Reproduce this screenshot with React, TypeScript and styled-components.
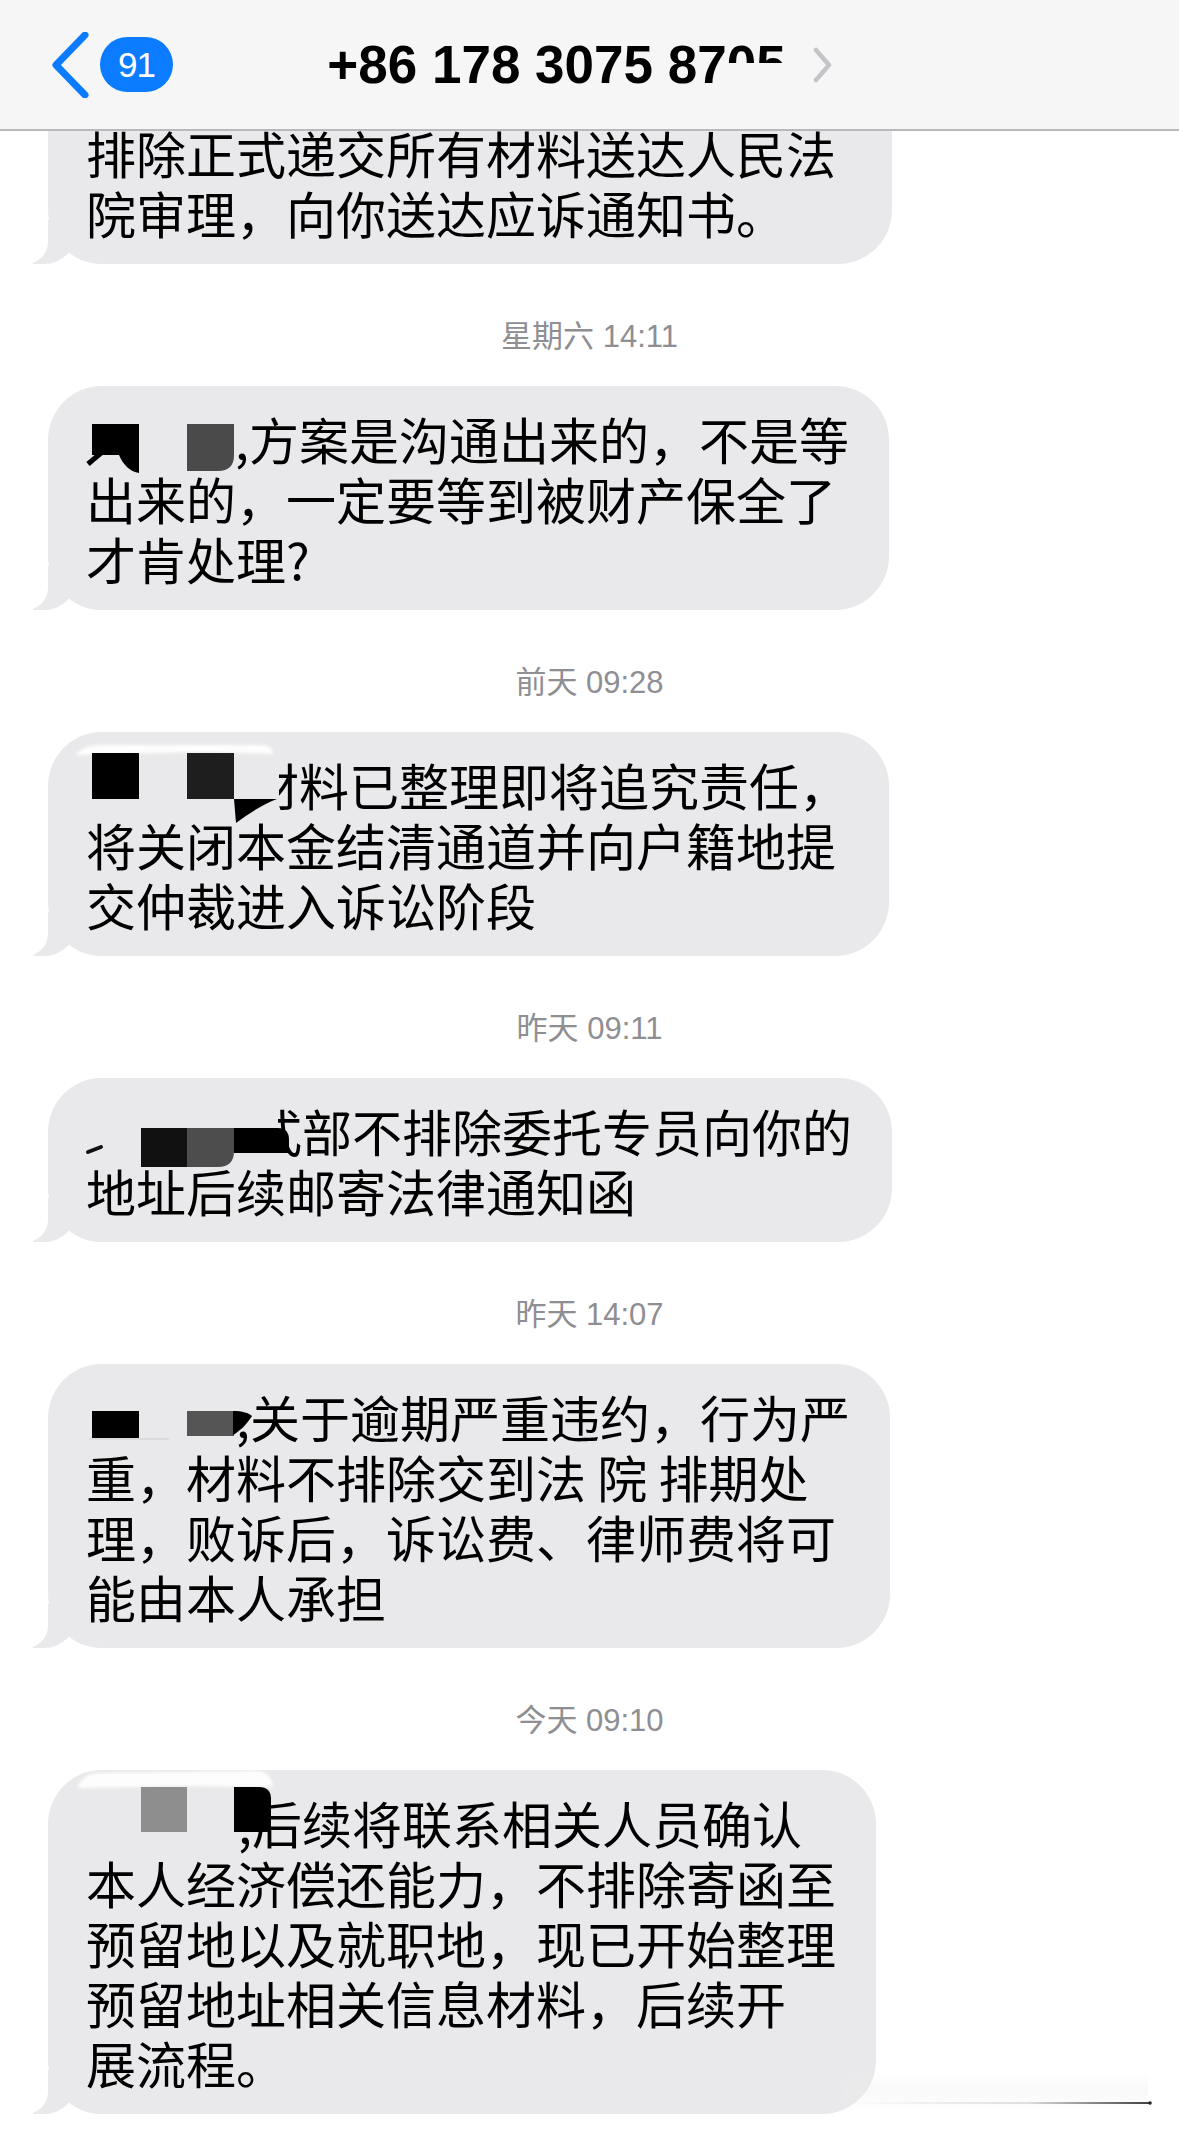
import React from "react";
import styled, { createGlobalStyle } from "styled-components";

const GlobalStyle = createGlobalStyle`
  html, body {
    margin: 0;
    padding: 0;
    background: #ffffff;
  }
  body {
    font-family: "Noto Sans CJK SC", "Noto Sans", sans-serif;
  }
`;

const Screen = styled.div`
  position: relative;
  width: 1179px;
  min-height: 2134px;
  overflow: hidden;
  background: #ffffff;
`;

/* ---------- navigation bar ---------- */

const NavBar = styled.header`
  position: absolute;
  top: 0;
  left: 0;
  right: 0;
  height: 129px;
  z-index: 5;
  display: grid;
  grid-template-columns: 1fr auto 1fr;
  align-items: center;
  background: #f6f6f6;
  border-bottom: 2px solid #b9b9bb;
`;

const BackButton = styled.div`
  display: flex;
  align-items: center;
  gap: 10px;
  padding-left: 50px;
`;

const UnreadBadge = styled.span`
  display: inline-flex;
  align-items: center;
  justify-content: center;
  min-width: 73px;
  height: 55px;
  border-radius: 28px;
  background: #0b7cff;
  color: #ffffff;
  font-family: "Liberation Sans", Arial, sans-serif;
  font-size: 35px;
  letter-spacing: -1px;
`;

const TitleGroup = styled.div`
  display: flex;
  align-items: center;
  gap: 26px;
  margin-left: -18px;
`;

const Title = styled.h1`
  margin: 0;
  font-family: "Liberation Sans", Arial, sans-serif;
  font-weight: 700;
  font-size: 53px;
  line-height: 53px;
  color: #000000;
  white-space: nowrap;
`;

const CutDigits = styled.span`
  display: inline-block;
  height: 25px;
  overflow: hidden;
  vertical-align: top;
  line-height: 53px;
`;

/* ---------- conversation ---------- */

const Thread = styled.main`
  display: flex;
  flex-direction: column;
  align-items: flex-start;
  padding: 42px 0 0 48px;
`;

const Stamp = styled.div`
  align-self: stretch;
  margin: 53px 48px 29px 0;
  text-align: center;
  font-family: "Liberation Sans", "Noto Sans CJK SC", sans-serif;
  font-size: 31px;
  line-height: 40px;
  color: #8e8e93;
`;

const Bubble = styled.div<{ $continued?: boolean }>`
  position: relative;
  box-sizing: border-box;
  width: ${(p) => (p.$continued ? "844px" : "auto")};
  padding: ${(p) => (p.$continued ? "80px" : "22px")} 40px 22px 38px;
  border-radius: 54px;
  background: #e9e9eb;
  color: #000000;
  font-size: 50px;
  line-height: 60px;

  &::before {
    content: "";
    position: absolute;
    z-index: 0;
    bottom: 0;
    left: -15px;
    width: 44px;
    height: 44px;
    background: #e9e9eb;
    border-bottom-right-radius: 33px;
  }

  &::after {
    content: "";
    position: absolute;
    z-index: 1;
    bottom: 0;
    left: -22px;
    width: 22px;
    height: 44px;
    background: #ffffff;
    border-bottom-right-radius: 22px;
  }
`;

const Line = styled.span`
  display: block;
  white-space: nowrap;
`;

const Mask = styled.svg`
  display: inline-block;
  vertical-align: top;
  height: 60px;
  overflow: visible;
`;

const Clip = styled.span<{ $w: number }>`
  display: inline-block;
  vertical-align: top;
  width: ${(p) => p.$w}px;
  height: 60px;
  overflow: hidden;
`;

const ClipInner = styled.span<{ $shift: number }>`
  display: inline-block;
  margin-left: ${(p) => p.$shift}px;
`;

const Smear = styled.svg`
  position: absolute;
  left: 838px;
  top: 2068px;
  width: 320px;
  height: 48px;
  pointer-events: none;
`;

/* ---------- small drawings ---------- */

const BackChevron = () => (
  <svg width="40" height="66" viewBox="0 0 40 66" aria-hidden>
    <path
      d="M35 3 L6 33 L35 63"
      fill="none"
      stroke="#0b7cff"
      strokeWidth="7"
      strokeLinecap="round"
      strokeLinejoin="round"
    />
  </svg>
);

const InfoChevron = () => (
  <svg width="22" height="36" viewBox="0 0 22 36" aria-hidden>
    <path
      d="M4 3 L17 18 L4 33"
      fill="none"
      stroke="#c4c4c8"
      strokeWidth="4.5"
      strokeLinecap="round"
      strokeLinejoin="round"
    />
  </svg>
);

const Wisp = ({ d, id }: { d: string; id: string }) => (
  <>
    <defs>
      <filter id={id} x="-10%" y="-100%" width="120%" height="300%">
        <feGaussianBlur stdDeviation="1.6" />
      </filter>
    </defs>
    <path d={d} fill="#ffffff" opacity="0.92" filter={`url(#${id})`} />
  </>
);

const MaskA = () => (
  <Mask width={149} viewBox="0 0 149 60" aria-hidden>
    <path d="M6 16 H53 V65 C45 64 37 57 33 47 H6 Z" fill="#000" />
    <path d="M2 56 L15 45" stroke="#000" strokeWidth="5" />
    <path d="M101 16 H148 V47 Q148 63 132 63 H101 Z" fill="#4a4a4a" />
  </Mask>
);

const MaskB = () => (
  <Mask width={193} viewBox="0 0 193 60" aria-hidden>
    <Wisp id="wispB" d="M-10 1 C-6 -5 2 -9 18 -9 L176 -9 C183 -9 187 -5 187 0 L120 -2 L-10 1 Z" />
    <rect x="6" y="-1" width="47" height="46" fill="#000" />
    <rect x="101" y="-1" width="47" height="46" fill="#1e1e1e" />
    <path d="M148 45 L191 45 C178 50 163 59 150 69 Z" fill="#000" />
  </Mask>
);

const MaskC = () => (
  <Mask width={192} viewBox="0 0 192 60" aria-hidden>
    <path d="M2 52 L15 47" stroke="#111" strokeWidth="4" strokeLinecap="round" />
    <rect x="55" y="28" width="46" height="39" fill="#111" />
    <path d="M101 28 H148 V51 Q148 67 132 67 H101 Z" fill="#4d4d4d" />
    <path d="M148 28 H192 Q203 28 203 40 V53 H148 Z" fill="#000" />
  </Mask>
);

const MaskD = () => (
  <Mask width={150} viewBox="0 0 150 60" aria-hidden>
    <rect x="6" y="25" width="47" height="27" fill="#000" />
    <line x1="3" y1="53" x2="83" y2="53" stroke="#cfcfd2" strokeWidth="1" />
    <rect x="101" y="25" width="47" height="25" fill="#555" />
    <path d="M147 25 C156 25 163 27 166 30 C160 39 154 45 147 49 Z" fill="#000" />
  </Mask>
);

const MaskE = () => (
  <Mask width={152} viewBox="0 0 152 60" aria-hidden>
    <Wisp id="wispE" d="M-8 -4 C-6 -12 0 -18 12 -19 L170 -21 C180 -21 186 -14 187 -5 L100 -6 L-8 -4 Z" />
    <rect x="55" y="-5" width="46" height="45" fill="#8e8e8e" />
    <path d="M148 -5 H173 Q185 -5 185 7 V40 H148 Z" fill="#000" />
  </Mask>
);

/* ---------- content ---------- */

type Message = {
  stamp?: string;
  continued?: boolean;
  lines: React.ReactNode[];
};

const messages: Message[] = [
  {
    continued: true,
    lines: ["排除正式递交所有材料送达人民法", "院审理，向你送达应诉通知书。"],
  },
  {
    stamp: "星期六 14:11",
    lines: [
      <>
        <MaskA />
        ,方案是沟通出来的，不是等
      </>,
      "出来的，一定要等到被财产保全了",
      "才肯处理?",
    ],
  },
  {
    stamp: "前天 09:28",
    lines: [
      <>
        <MaskB />
        <Clip $w={20}>
          <ClipInner $shift={-30}>材</ClipInner>
        </Clip>
        料已整理即将追究责任，
      </>,
      "将关闭本金结清通道并向户籍地提",
      "交仲裁进入诉讼阶段",
    ],
  },
  {
    stamp: "昨天 09:11",
    lines: [
      <>
        <MaskC />
        <Clip $w={24}>
          <ClipInner $shift={-26}>式</ClipInner>
        </Clip>
        部不排除委托专员向你的
      </>,
      "地址后续邮寄法律通知函",
    ],
  },
  {
    stamp: "昨天 14:07",
    lines: [
      <>
        <MaskD />
        ,关于逾期严重违约，行为严
      </>,
      "重，材料不排除交到法 院 排期处",
      "理，败诉后，诉讼费、律师费将可",
      "能由本人承担",
    ],
  },
  {
    stamp: "今天 09:10",
    lines: [
      <>
        <MaskE />
        ,后续将联系相关人员确认
      </>,
      "本人经济偿还能力，不排除寄函至",
      "预留地以及就职地，现已开始整理",
      "预留地址相关信息材料，后续开",
      "展流程。",
    ],
  },
];

export default function App() {
  return (
    <Screen>
      <GlobalStyle />
      <NavBar>
        <BackButton>
          <BackChevron />
          <UnreadBadge>91</UnreadBadge>
        </BackButton>
        <TitleGroup>
          <Title>
            +86 178 3075 87<CutDigits>05</CutDigits>
          </Title>
          <InfoChevron />
        </TitleGroup>
        <div />
      </NavBar>

      <Thread>
        {messages.map((m, i) => (
          <React.Fragment key={i}>
            {m.stamp && <Stamp>{m.stamp}</Stamp>}
            <Bubble $continued={m.continued}>
              {m.lines.map((l, j) => (
                <Line key={j}>{l}</Line>
              ))}
            </Bubble>
          </React.Fragment>
        ))}
      </Thread>

      {/* faint trail left along the lower right edge */}
      <Smear viewBox="0 0 320 48" aria-hidden>
        <defs>
          <linearGradient id="trail" x1="0" x2="1" y1="0" y2="0">
            <stop offset="0" stopColor="#000" stopOpacity="0" />
            <stop offset="0.6" stopColor="#000" stopOpacity="0.12" />
            <stop offset="1" stopColor="#000" stopOpacity="0.75" />
          </linearGradient>
          <linearGradient id="haze" x1="0" x2="0" y1="0" y2="1">
            <stop offset="0" stopColor="#ececec" stopOpacity="0" />
            <stop offset="0.5" stopColor="#ececec" stopOpacity="0.35" />
            <stop offset="1" stopColor="#ececec" stopOpacity="0" />
          </linearGradient>
        </defs>
        <rect x="6" y="4" width="304" height="38" fill="url(#haze)" />
        <rect x="6" y="34" width="306" height="2" fill="url(#trail)" />
        <circle cx="312" cy="35" r="1.8" fill="#222" />
      </Smear>
    </Screen>
  );
}
